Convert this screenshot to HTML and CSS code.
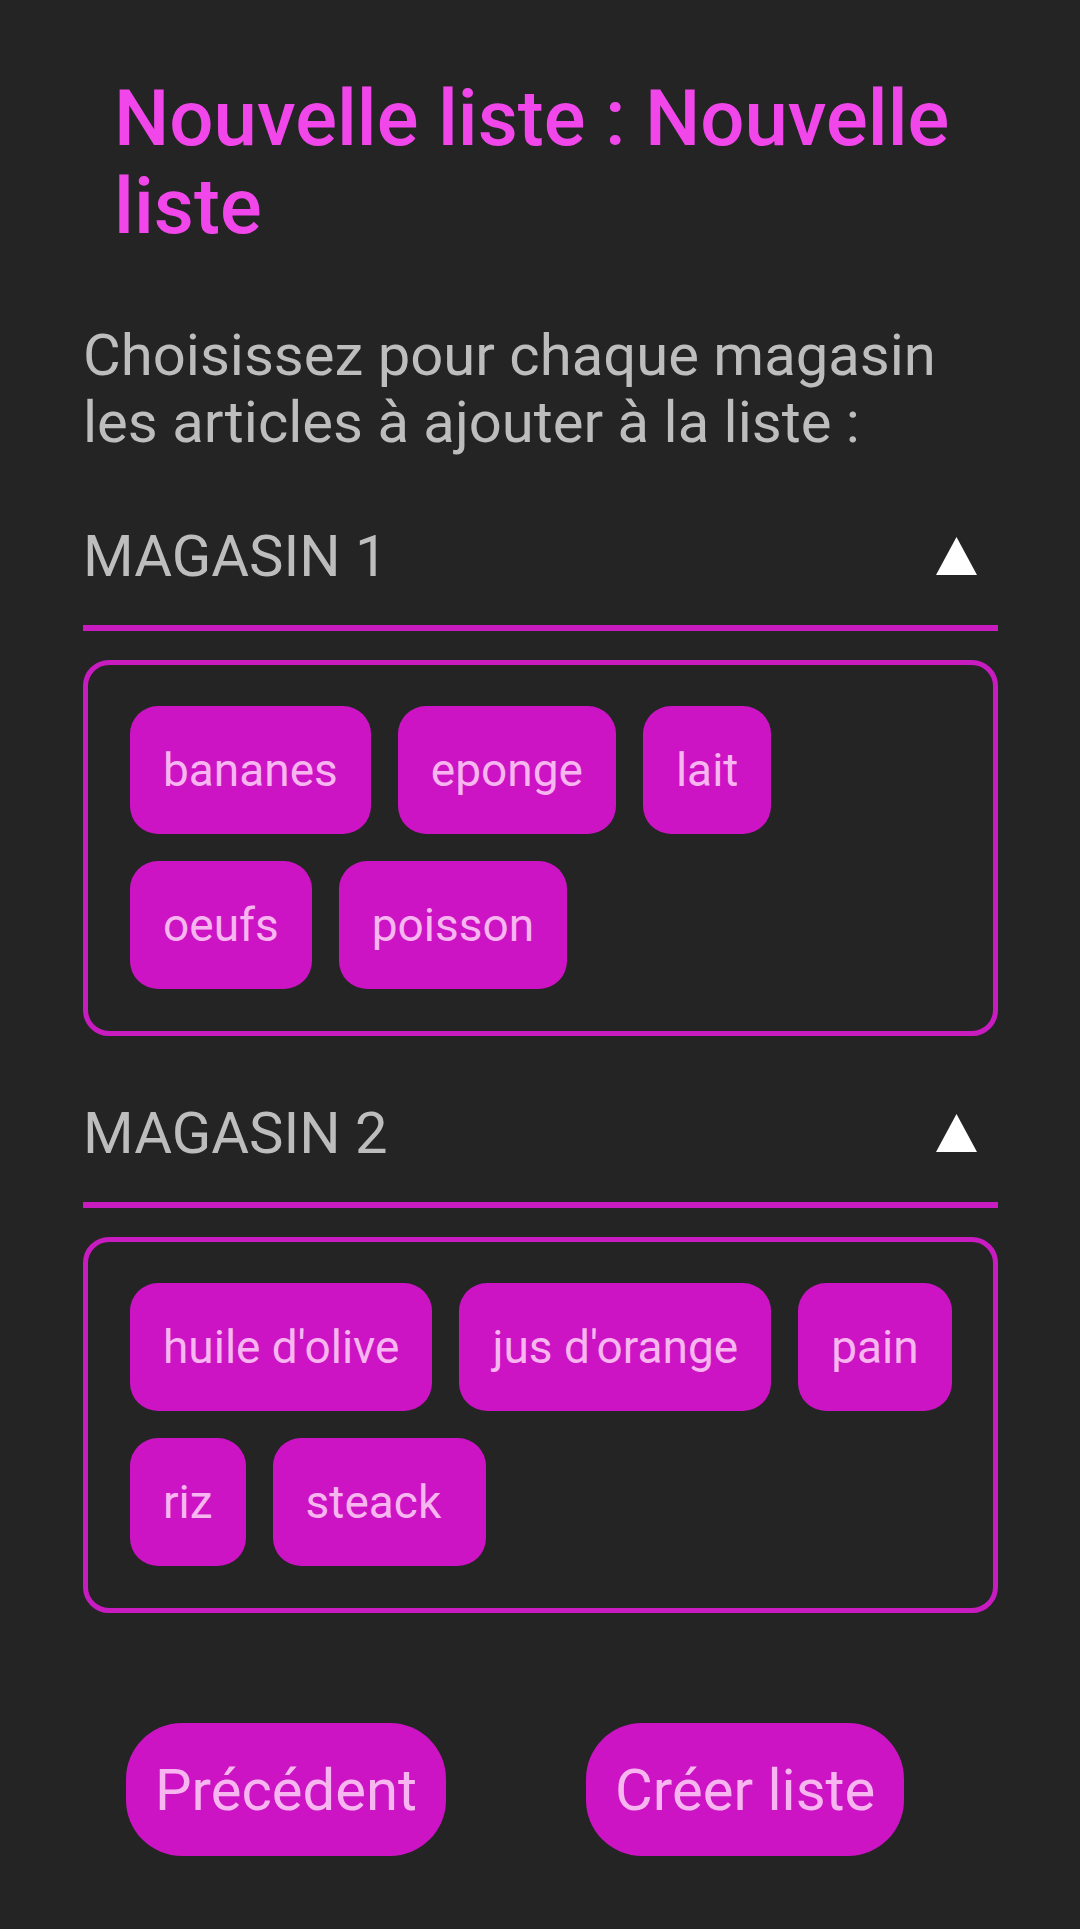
FILE: index.html
```html
<!DOCTYPE html>
<html lang="fr">
<head>
<meta charset="utf-8">
<title>Nouvelle liste</title>
<link rel="stylesheet" href="styles.css">
</head>
<body>
<main class="screen">
  <h1 class="title">Nouvelle liste : Nouvelle liste</h1>
  <p class="intro">Choisissez pour chaque magasin les articles à ajouter à la liste :</p>

  <section class="store">
    <div class="store-head">
      <span class="store-name">MAGASIN 1</span>
      <svg class="toggle" viewBox="0 0 41 38" width="41" height="38" aria-hidden="true"><polygon points="20.5,0 41,38 0,38" fill="#ffffff"/></svg>
    </div>
    <div class="items">
      <span class="chip">bananes</span>
      <span class="chip">eponge</span>
      <span class="chip">lait</span>
      <span class="chip">oeufs</span>
      <span class="chip">poisson</span>
    </div>
  </section>

  <section class="store store-next">
    <div class="store-head">
      <span class="store-name">MAGASIN 2</span>
      <svg class="toggle" viewBox="0 0 41 38" width="41" height="38" aria-hidden="true"><polygon points="20.5,0 41,38 0,38" fill="#ffffff"/></svg>
    </div>
    <div class="items">
      <span class="chip">huile d'olive</span>
      <span class="chip">jus d'orange</span>
      <span class="chip">pain</span>
      <span class="chip">riz</span>
      <span class="chip">steack&nbsp;</span>
    </div>
  </section>

  <div class="actions">
    <button class="btn" type="button">Précédent</button>
    <button class="btn" type="button">Créer liste</button>
  </div>
</main>
</body>
</html>
```

FILE: styles.css
```css
html, body {
  margin: 0;
  padding: 0;
  background: #242424;
}

body {
  font-family: Roboto, "Noto Sans", "Liberation Sans", sans-serif;
  width: 1080px;
  min-height: 1929px;
}

.screen {
  padding: 75px 82px 0 83px;
}

.title {
  margin: 0 0 0 31px;
  font-size: 78px;
  font-weight: 500;
  line-height: 88px;
  color: #f046ea;
}

.intro {
  margin: 71px 0 0 0;
  font-size: 58px;
  font-weight: 400;
  line-height: 67px;
  color: #bdbdbd;
}

.store {
  margin-top: 67px;
}

.store-next {
  margin-top: 64px;
}

.store-head {
  display: flex;
  align-items: center;
  justify-content: space-between;
  padding: 0 21px 35px 0;
  border-bottom: 6px solid #c81cc0;
}

.store-name {
  font-size: 58px;
  line-height: 67px;
  color: #bdbdbd;
}

.toggle {
  display: block;
  margin-top: -2px;
}

.items {
  margin-top: 29px;
  border: 5px solid #c81cc0;
  border-radius: 26px;
  padding: 41px 20px 42px 42px;
  display: flex;
  flex-wrap: wrap;
  gap: 27px 27px;
}

.chip {
  display: inline-flex;
  align-items: center;
  height: 128px;
  padding: 0 33px;
  box-sizing: border-box;
  background: #cc14c4;
  color: #f7b6f0;
  border-radius: 28px;
  font-size: 46px;
  white-space: nowrap;
}

.actions {
  margin-top: 110px;
  padding-left: 43px;
  display: flex;
  gap: 140px;
}

.btn {
  height: 133px;
  padding: 0 29px;
  border: none;
  border-radius: 56px;
  background: #cc14c4;
  color: #f7b6f0;
  font-family: Roboto, "Noto Sans", "Liberation Sans", sans-serif;
  font-size: 58px;
  font-weight: 400;
}
```
